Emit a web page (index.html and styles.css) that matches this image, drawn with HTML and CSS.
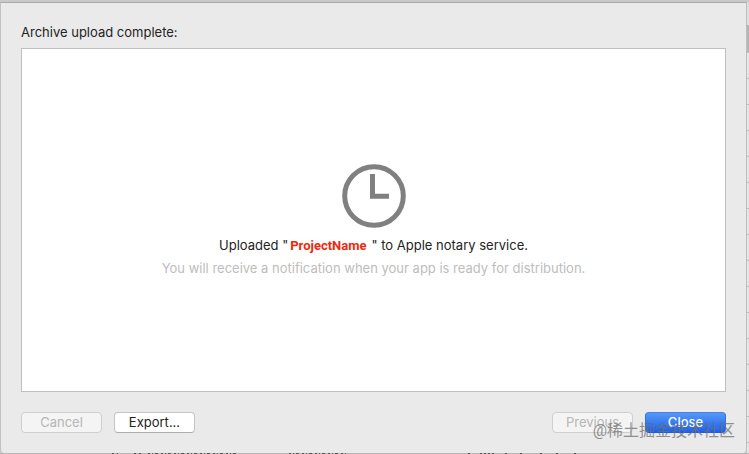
FILE: index.html
```
<!DOCTYPE html>
<html lang="en">
<head>
    <meta charset="UTF-8">
    <meta name="viewport" content="width=device-width, initial-scale=1.0">
    <title>Archive upload complete</title>
    <link rel="stylesheet" href="styles.css">
</head>
<body>
    <main class="dialog">
        <h1 class="title">Archive upload complete:</h1>

        <section class="panel">
            <svg class="clock" viewBox="0 0 64 64" aria-hidden="true">
                <circle cx="32" cy="32" r="29.3" />
                <path d="M30.5 10V32.3H47" />
            </svg>
            <p class="message">Uploaded "<strong class="project">ProjectName</strong>" to Apple notary service.</p>
            <p class="hint">You will receive a notification when your app is ready for distribution.</p>
        </section>

        <footer class="actions">
            <button class="btn" type="button" disabled>Cancel</button>
            <button class="btn" type="button">Export...</button>
            <button class="btn btn-previous" type="button" disabled>Previous</button>
            <button class="btn btn-primary" type="button">Close</button>
        </footer>
    </main>

    <!-- sliver of the window behind the sheet -->
    <div class="window-edge"></div>
    <div class="window-bottom">
        <svg class="row-tops" width="749" height="1" aria-hidden="true">
            <path d="M112 .5h6M134 .5h8" stroke-dasharray="2 3" />
            <path d="M148 .5h88M289 .5h58" stroke-dasharray="2 2 1 2 3 3" />
            <path d="M468 .5h2M480 .5h14M505 .5h3M520 .5h3M540 .5h3M556 .5h3M574 .5h3" stroke-dasharray="2 2" />
        </svg>
    </div>

    <span class="watermark">@稀土掘金技术社区</span>
</body>
</html>
```

FILE: styles.css
```
* {
    box-sizing: border-box;
}

body {
    position: relative;
    display: grid;
    grid-template-columns: 1fr 2px;
    grid-template-rows: 1fr 1px;
    min-height: 100vh;
    margin: 0;
    padding-top: 2px;
    background: #c9c9c9;
    color: #232323;
    font-family: Inter, "Noto Sans CJK SC", sans-serif;
    font-size: 13px;
    line-height: 16px;
}

.dialog {
    display: flex;
    flex-direction: column;
    padding: 21px 20px 20px;
    border: 1px solid #a9a9a9;
    border-left-color: #c2c2c2;
    border-right-color: #bdbdbd;
    border-bottom: 0;
    border-radius: 0 0 4px 4px;
    background: #eaeaea;
}

.title {
    margin: 0 0 8px;
    font-size: 13px;
    font-weight: 400;
}

.panel {
    flex: 1;
    display: flex;
    flex-direction: column;
    align-items: center;
    justify-content: center;
    border: 1px solid #bfbfbf;
    background: #fff;
}

.clock {
    width: 64px;
    height: 64px;
    margin-bottom: 9px;
    fill: none;
    stroke: #808080;
    stroke-width: 5;
}

.message,
.hint {
    margin: 0;
}

.message {
    margin-bottom: 6px;
}

.project {
    margin: 0 5px 0 2px;
    color: #ee2a0c;
    font-family: Roboto, sans-serif;
    font-weight: 700;
}

.hint {
    color: #bdbdbd;
}

.actions {
    display: flex;
    gap: 12px;
    margin-top: 20px;
}

.btn {
    width: 81px;
    height: 21px;
    padding: 0 0 2px;
    border: 1px solid #c4c4c4;
    border-bottom-color: #adadad;
    border-radius: 4px;
    background: #fff;
    color: #232323;
    font: inherit;
}

.btn:disabled {
    border-color: #cfcfcf;
    background: #f4f4f4;
    color: #b5b5b5;
}

.btn-previous {
    margin-left: auto;
}

.btn-primary {
    border-color: #3f83f0 #2f70ed #1b5ce4;
    background: linear-gradient(#5797f6, #1a61f0);
    color: #fff;
    font-weight: 500;
}

.window-edge {
    background:
        linear-gradient(#dedede 23px, #b5b5b5 23px, #b5b5b5 50px, transparent 50px),
        repeating-linear-gradient(#e6e6e6 0 24px, #c2c2c2 24px 25px, #e6e6e6 25px 26px);
}

.window-bottom {
    grid-column: 1 / -1;
    overflow: hidden;
    background: #b5b5b5;
}

.row-tops {
    display: block;
    stroke: #555;
}

.watermark {
    position: absolute;
    right: 14px;
    bottom: 13px;
    color: rgba(110, 110, 110, 0.75);
    font-family: Roboto, "Noto Sans CJK SC", sans-serif;
    font-size: 16px;
    line-height: 20px;
    pointer-events: none;
}
```
